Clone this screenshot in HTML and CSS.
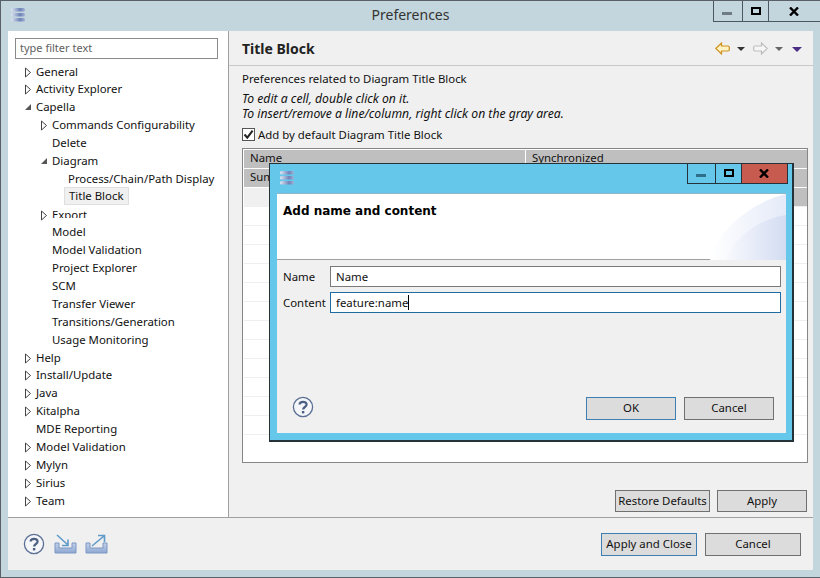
FILE: index.html
```html
<!DOCTYPE html>
<html lang="en">
<head>
    <meta charset="UTF-8">
    <title>Preferences</title>
    <link rel="stylesheet" href="styles.css">
</head>
<body>
    <svg class="defs" width="0" height="0">
        <defs>
            <linearGradient id="bar" x1="0" x2="1" y1="0" y2="0">
                <stop offset="0" stop-color="#dfe7f3"/>
                <stop offset="0.65" stop-color="#6f82b8"/>
                <stop offset="1" stop-color="#a3b2d6"/>
            </linearGradient>
            <linearGradient id="tray" x1="0" x2="0" y1="0" y2="1">
                <stop offset="0" stop-color="#c3d2ea"/>
                <stop offset="1" stop-color="#8ea8d2"/>
            </linearGradient>
            <linearGradient id="corner" x1="0" x2="1" y1="0" y2="0">
                <stop offset="0" stop-color="#ffffff"/>
                <stop offset="1" stop-color="#e4eaf8"/>
            </linearGradient>
            <linearGradient id="corner2" x1="0" x2="1" y1="0" y2="0">
                <stop offset="0" stop-color="#f8f9fd"/>
                <stop offset="1" stop-color="#d3dcf2"/>
            </linearGradient>
            <symbol id="closed" viewBox="0 0 12 12">
                <path d="M1.5 2 L6.5 6.5 L1.5 11 Z" fill="#fff" stroke="#444" stroke-width="1"/>
            </symbol>
            <symbol id="open" viewBox="0 0 12 12">
                <path d="M7 3 L7 9 L1 9 Z" fill="#555"/>
            </symbol>
            <symbol id="logo" viewBox="0 0 16 16">
                <rect x="1" y="1" width="14" height="3.5" rx="1.5" fill="url(#bar)"/>
                <rect x="1" y="6" width="14" height="3.5" rx="1.5" fill="url(#bar)"/>
                <rect x="1" y="11" width="14" height="3.5" rx="1.5" fill="url(#bar)"/>
            </symbol>
            <symbol id="help" viewBox="0 0 22 22">
                <circle cx="11" cy="11" r="9.6" fill="#f4f6fa" stroke="#5b6f94" stroke-width="1.3"/>
                <path d="M7.6 8.6 C7.6 4.9 14.6 4.9 14.6 8.5 C14.6 11 11.1 11 11.1 13.6" fill="none" stroke="#4d5f82" stroke-width="2.2"/>
                <rect x="9.9" y="15" width="2.4" height="2.4" fill="#4d5f82"/>
            </symbol>
        </defs>
    </svg>

    <div class="window">
        <div class="titlebar">
            <svg class="logo"><use href="#logo"/></svg>
            <div class="title">Preferences</div>
            <div class="controls">
                <div class="ctl ctl-min"><i class="glyph-min"></i></div>
                <div class="ctl ctl-max"><i class="glyph-max"></i></div>
                <div class="ctl ctl-close">
                    <svg width="10" height="9" viewBox="0 0 10 9"><path d="M1 0.5 L9 8.5 M9 0.5 L1 8.5" stroke="#000" stroke-width="2.4"/></svg>
                </div>
            </div>
        </div>

        <div class="client">
            <div class="main">
                <div class="sidebar">
                    <input class="filter" type="text" value="type filter text">
                    <div class="tree">
                        <div class="node l0"><svg class="tw"><use href="#closed"/></svg><span>General</span></div>
                        <div class="node l0"><svg class="tw"><use href="#closed"/></svg><span>Activity Explorer</span></div>
                        <div class="node l0"><svg class="tw"><use href="#open"/></svg><span>Capella</span></div>
                        <div class="node l1"><svg class="tw"><use href="#closed"/></svg><span>Commands Configurability</span></div>
                        <div class="node l1"><i class="tw"></i><span>Delete</span></div>
                        <div class="node l1"><svg class="tw"><use href="#open"/></svg><span>Diagram</span></div>
                        <div class="node l2"><i class="tw"></i><span>Process/Chain/Path Display</span></div>
                        <div class="node l2"><i class="tw"></i><span class="selected">Title Block</span></div>
                        <div class="node l1"><svg class="tw"><use href="#closed"/></svg><span class="clipped">Export</span></div>
                        <div class="node l1"><i class="tw"></i><span>Model</span></div>
                        <div class="node l1"><i class="tw"></i><span>Model Validation</span></div>
                        <div class="node l1"><i class="tw"></i><span>Project Explorer</span></div>
                        <div class="node l1"><i class="tw"></i><span>SCM</span></div>
                        <div class="node l1"><i class="tw"></i><span>Transfer Viewer</span></div>
                        <div class="node l1"><i class="tw"></i><span>Transitions/Generation</span></div>
                        <div class="node l1"><i class="tw"></i><span>Usage Monitoring</span></div>
                        <div class="node l0"><svg class="tw"><use href="#closed"/></svg><span>Help</span></div>
                        <div class="node l0"><svg class="tw"><use href="#closed"/></svg><span>Install/Update</span></div>
                        <div class="node l0"><svg class="tw"><use href="#closed"/></svg><span>Java</span></div>
                        <div class="node l0"><svg class="tw"><use href="#closed"/></svg><span>Kitalpha</span></div>
                        <div class="node l0"><i class="tw"></i><span>MDE Reporting</span></div>
                        <div class="node l0"><svg class="tw"><use href="#closed"/></svg><span>Model Validation</span></div>
                        <div class="node l0"><svg class="tw"><use href="#closed"/></svg><span>Mylyn</span></div>
                        <div class="node l0"><svg class="tw"><use href="#closed"/></svg><span>Sirius</span></div>
                        <div class="node l0"><svg class="tw"><use href="#closed"/></svg><span>Team</span></div>
                    </div>
                </div>

                <div class="content">
                    <div class="page-head">
                        <h2>Title Block</h2>
                        <div class="nav">
                            <svg class="nav-arrow" width="15" height="13" viewBox="0 0 15 13"><path d="M0.8 6.5 L6.5 1 V4 H13 Q14.3 4 14.3 5.2 V7.8 Q14.3 9 13 9 H6.5 V12 Z" fill="#fff3c4" stroke="#cf921f" stroke-width="1.2"/></svg>
                            <i class="drop drop-dark"></i>
                            <svg class="nav-arrow" width="15" height="13" viewBox="0 0 15 13"><path d="M14.2 6.5 L8.5 1 V4 H2 Q0.7 4 0.7 5.2 V7.8 Q0.7 9 2 9 H8.5 V12 Z" fill="#f6f6f6" stroke="#bdbdbd" stroke-width="1.2"/></svg>
                            <i class="drop drop-grey"></i>
                            <i class="drop drop-menu"></i>
                        </div>
                    </div>
                    <div class="page-body">
                        <p class="desc">Preferences related to Diagram Title Block</p>
                        <p class="hint">To edit a cell, double click on it.<br>To insert/remove a line/column, right click on the gray area.</p>
                        <label class="check">
                            <span class="box"><svg width="11" height="11" viewBox="0 0 11 11"><path d="M1.5 5.5 L4.3 8.6 L9.6 1.6" fill="none" stroke="#222" stroke-width="2"/></svg></span>
                            Add by default Diagram Title Block
                        </label>
                        <div class="table">
                            <div class="trow thead"><div>Name</div><div>Synchronized</div></div>
                            <div class="trow tgrey"><div>Summary</div><div></div></div>
                            <div class="trow tsel"><div></div><div></div></div>
                            <div class="trow"><div></div><div></div></div>
                            <div class="trow"><div></div><div></div></div>
                            <div class="trow"><div></div><div></div></div>
                            <div class="trow"><div></div><div></div></div>
                            <div class="trow"><div></div><div></div></div>
                            <div class="trow"><div></div><div></div></div>
                            <div class="trow"><div></div><div></div></div>
                            <div class="trow"><div></div><div></div></div>
                            <div class="trow"><div></div><div></div></div>
                            <div class="trow"><div></div><div></div></div>
                            <div class="trow"><div></div><div></div></div>
                            <div class="trow"><div></div><div></div></div>
                        </div>
                        <div class="page-buttons">
                            <button class="btn btn-restore">Restore Defaults</button>
                            <button class="btn btn-apply">Apply</button>
                        </div>
                    </div>
                </div>
            </div>

            <div class="footer">
                <svg class="help" width="22" height="22"><use href="#help"/></svg>
                <svg class="tool" width="23" height="20" viewBox="0 0 23 20">
                    <path d="M1 9 H5 V14 H18 V9 H22 V19 H1 Z" fill="url(#tray)" stroke="#7c97c4"/>
                    <path d="M3 1 L14 11 M14 5.5 V11.5 H8" fill="none" stroke="#5f9bc9" stroke-width="1.6"/>
                </svg>
                <svg class="tool" width="23" height="20" viewBox="0 0 23 20">
                    <path d="M1 9 H5 V14 H18 V9 H22 V19 H1 Z" fill="url(#tray)" stroke="#7c97c4"/>
                    <path d="M7 12 L19 2 M13 1.5 H19.5 V8" fill="none" stroke="#5f9bc9" stroke-width="1.6"/>
                </svg>
                <div class="footer-buttons">
                    <button class="btn btn-wide btn-default">Apply and Close</button>
                    <button class="btn btn-wide">Cancel</button>
                </div>
            </div>
        </div>
    </div>

    <div class="dialog">
        <div class="dialog-bar">
            <svg class="dialog-logo"><use href="#logo"/></svg>
            <div class="controls dialog-controls">
                <div class="ctl ctl-d1"><i class="glyph-min glyph-dim"></i></div>
                <div class="ctl ctl-d2"><i class="glyph-max"></i></div>
                <div class="ctl ctl-d3">
                    <svg width="10" height="9" viewBox="0 0 10 9"><path d="M1 0.5 L9 8.5 M9 0.5 L1 8.5" stroke="#000" stroke-width="2.4"/></svg>
                </div>
            </div>
        </div>
        <div class="dialog-client">
            <div class="dialog-head">
                <h3>Add name and content</h3>
                <svg class="dialog-art" width="76" height="66" viewBox="0 0 76 66">
                    <path d="M0 66 C6 40 36 10 76 0 V66 Z" fill="url(#corner)"/>
                    <path d="M16 66 C24 44 46 26 76 21 V66 Z" fill="url(#corner2)"/>
                </svg>
            </div>
            <div class="dialog-form">
                <div class="field">
                    <label>Name</label>
                    <input class="text" type="text" value="Name">
                </div>
                <div class="field">
                    <label>Content</label>
                    <div class="text text-focus">feature:name<i class="caret"></i></div>
                </div>
            </div>
            <div class="dialog-foot">
                <svg class="help" width="22" height="22"><use href="#help"/></svg>
                <div class="dialog-buttons">
                    <button class="btn btn-dlg btn-default">OK</button>
                    <button class="btn btn-dlg">Cancel</button>
                </div>
            </div>
        </div>
    </div>
</body>
</html>
```

FILE: styles.css
```css
* {
    box-sizing: border-box;
}
html, body {
    margin: 0;
    height: 100%;
    overflow: hidden;
}
body {
    font-family: "Noto Sans", Arial, sans-serif;
    font-size: 11.4px;
    color: #111;
    background: #c3d6dd;
    position: relative;
}
.defs {
    position: absolute;
}
.window {
    height: 578px;
    border-top: 1px solid #5a6068;
    border-left: 1px solid #5a6068;
    border-bottom: 1px solid #5a6068;
    display: flex;
    flex-direction: column;
}

/* title bar */
.titlebar {
    height: 30px;
    display: grid;
    grid-template-columns: 1fr auto 1fr;
    align-items: start;
}
.logo {
    width: 16px;
    height: 16px;
    margin: 6px 0 0 9px;
}
.title {
    font-size: 14px;
    line-height: 28px;
    color: #333;
}
.controls {
    display: flex;
    justify-self: end;
    height: 21px;
}
.ctl {
    display: flex;
    align-items: center;
    justify-content: center;
    border: 1px solid #4c5760;
    border-top: 0;
    border-left-width: 1px;
    margin-left: -1px;
}
.ctl-min {
    width: 30px;
}
.ctl-max {
    width: 27px;
}
.ctl-close {
    width: 52px;
    border-right: 0;
}
.ctl-close svg {
    margin-right: 2px;
}
.glyph-min {
    display: block;
    width: 10px;
    height: 3px;
    margin: 4px 2px 0 0;
    background: #707c84;
}
.glyph-max {
    display: block;
    width: 10px;
    height: 8px;
    border: 2px solid #000;
    margin-top: -1px;
}
.glyph-dim {
    background: #2f6f8c;
}

/* main area */
.client {
    flex: 1;
    margin: 0 7px 7px 7px;
    background: #f0f0f0;
    display: flex;
    flex-direction: column;
}
.main {
    height: 487px;
    display: flex;
    border-bottom: 1px solid #a0a0a0;
}
.sidebar {
    width: 221px;
    background: #fff;
    border-right: 1px solid #a0a0a0;
    padding: 7px 0 0 7px;
}
.filter {
    display: block;
    width: 203px;
    height: 21px;
    border: 1px solid #8a8a8a;
    padding: 0 4px 2px;
    font: inherit;
    font-size: 11px;
    color: #5f5f5f;
    outline: none;
}
.tree {
    margin: 3.63px 0 0 -7px;
}
.node {
    height: 17.88px;
    line-height: 18px;
    display: flex;
    align-items: center;
    white-space: nowrap;
}
.l0 {
    padding-left: 16px;
}
.l1 {
    padding-left: 32px;
}
.l2 {
    padding-left: 48px;
}
.tw {
    display: block;
    width: 12px;
    height: 12px;
    flex: none;
}
.selected {
    margin-left: -4px;
    padding: 0 4px;
    line-height: 16px;
    background: #f0f0f0;
    border: 1px solid #dfdfdf;
    margin-top: -1px;
}
.clipped {
    height: 10px;
    line-height: 14px;
    margin-bottom: 4px;
    overflow: hidden;
}

/* right side */
.content {
    flex: 1;
    display: flex;
    flex-direction: column;
}
.page-head {
    height: 35px;
    display: flex;
    align-items: center;
    justify-content: space-between;
    padding: 1px 11px 1px 13px;
    border-bottom: 1px solid #c8c8c8;
}
h2 {
    margin: 0;
    font-size: 14px;
    font-weight: 700;
    color: #222;
}
.nav {
    display: flex;
    align-items: center;
    margin-top: 1px;
}
.nav-arrow {
    display: block;
}
.drop {
    display: block;
    width: 0;
    height: 0;
    border-left: 4px solid transparent;
    border-right: 4px solid transparent;
    border-top: 4px solid #333;
    margin: 1px 8px 0 7px;
}
.drop-grey {
    border-top-color: #666;
    margin-right: 9px;
}
.drop-menu {
    border-left-width: 5px;
    border-right-width: 5px;
    border-top: 5px solid #4a2d85;
    margin: 1px 0 0 0;
}
.page-body {
    flex: 1;
    padding: 0 5px 0 13px;
    display: flex;
    flex-direction: column;
}
.desc {
    margin: 4px 0 0;
    line-height: 17px;
}
.hint {
    margin: 4px 0 0;
    font-size: 12.2px;
    font-style: italic;
    line-height: 15px;
}
.check {
    display: flex;
    align-items: center;
    margin-top: 5px;
    height: 17px;
    gap: 3px;
}
.box {
    width: 13px;
    height: 13px;
    border: 1px solid #555;
    background: #fff;
    display: flex;
    align-items: center;
    justify-content: center;
}
.table {
    margin-top: 5px;
    height: 315px;
    border: 1px solid #868686;
    background: #fff;
    padding: 1px 0 0 1px;
    overflow: hidden;
}
.trow {
    height: 19px;
    display: grid;
    grid-template-columns: 281px 1fr;
    border-bottom: 1px solid #efefef;
}
.trow > div {
    padding-left: 6px;
    line-height: 16px;
}
.trow > div + div {
    border-left: 1px solid #efefef;
}
.thead, .tgrey {
    background: #bfbfbf;
    border-bottom-color: #fff;
}
.thead > div + div, .tgrey > div + div {
    border-left-color: #fff;
}
.tsel > div:first-child {
    background: #f0f0f0;
}
.tsel > div + div {
    background: #bfbfbf;
}
.page-buttons {
    display: flex;
    justify-content: flex-end;
    gap: 7px;
    margin: 27px 1px 0 0;
}
.btn {
    font: inherit;
    color: #111;
    background: #dcdcdc;
    border: 1px solid #707070;
    padding: 0 0 2px;
    height: 22px;
    white-space: nowrap;
}
.btn-restore {
    width: 95px;
}
.btn-apply {
    width: 90px;
}
.btn-default {
    border-color: #3d7fb0;
}
.footer {
    flex: 1;
    display: flex;
    align-items: flex-start;
    padding: 15px 12px 0 15px;
}
.help {
    display: block;
}
.footer .help {
    margin-right: 1px;
}
.tool {
    display: block;
    margin: 1px 0 0 8px;
}
.footer-buttons {
    margin-left: auto;
    display: flex;
    gap: 8px;
}
.btn-wide {
    width: 96px;
    height: 23px;
}

/* dialog on top of the window */
.dialog {
    position: absolute;
    left: 269px;
    top: 163px;
    width: 525px;
    height: 279px;
    background: #65c8ea;
    border: 1px solid #26323a;
    border-width: 1px 2px 2px 1px;
    display: flex;
    flex-direction: column;
}
.dialog-bar {
    height: 29px;
    position: relative;
}
.dialog-logo {
    width: 16px;
    height: 16px;
    margin: 6px 0 0 9px;
    display: block;
}
.dialog-controls {
    position: absolute;
    right: 4px;
    top: 0;
    height: 20px;
}
.ctl-d1 {
    width: 29px;
    border-color: #26323a;
}
.ctl-d2 {
    width: 27px;
    border-color: #26323a;
}
.ctl-d3 {
    width: 47px;
    border-color: #26323a;
    background: #c75b50;
}
.ctl-d3 svg {
    margin-right: 2px;
}
.dialog-client {
    flex: 1;
    margin: 0 6px 7px 7px;
    background: #f0f0f0;
    display: flex;
    flex-direction: column;
    border-top: 1px solid #8fb6c6;
}
.dialog-head {
    height: 66px;
    background: #fff;
    border-bottom: 1px solid #a0a0a0;
    position: relative;
    flex: none;
}
h3 {
    margin: 0;
    padding: 10px 0 0 6px;
    font-family: "DejaVu Sans", sans-serif;
    font-size: 12px;
    font-weight: 700;
    color: #000;
}
.dialog-art {
    position: absolute;
    right: 0;
    top: 0;
}
.dialog-form {
    padding: 6px 5px 0 6px;
}
.field {
    display: flex;
    align-items: center;
    height: 21px;
    margin-bottom: 5px;
}
.field label {
    width: 47px;
}
.text {
    flex: 1;
    height: 21px;
    border: 1px solid #7a7a7a;
    background: #fff;
    padding: 0 5px;
    font: inherit;
    color: #111;
    line-height: 19px;
    outline: none;
}
.text-focus {
    border-color: #1f6ca3;
}
.caret {
    display: inline-block;
    width: 1px;
    height: 15px;
    background: #000;
    vertical-align: -3px;
}
.dialog-foot {
    flex: 1;
    display: flex;
    align-items: flex-start;
    padding: 79px 12px 0 15px;
}
.dialog-foot .help {
    margin-top: -1px;
}
.dialog-buttons {
    margin-left: auto;
    display: flex;
    gap: 8px;
}
.btn-dlg {
    width: 90px;
    height: 23px;
}
```
